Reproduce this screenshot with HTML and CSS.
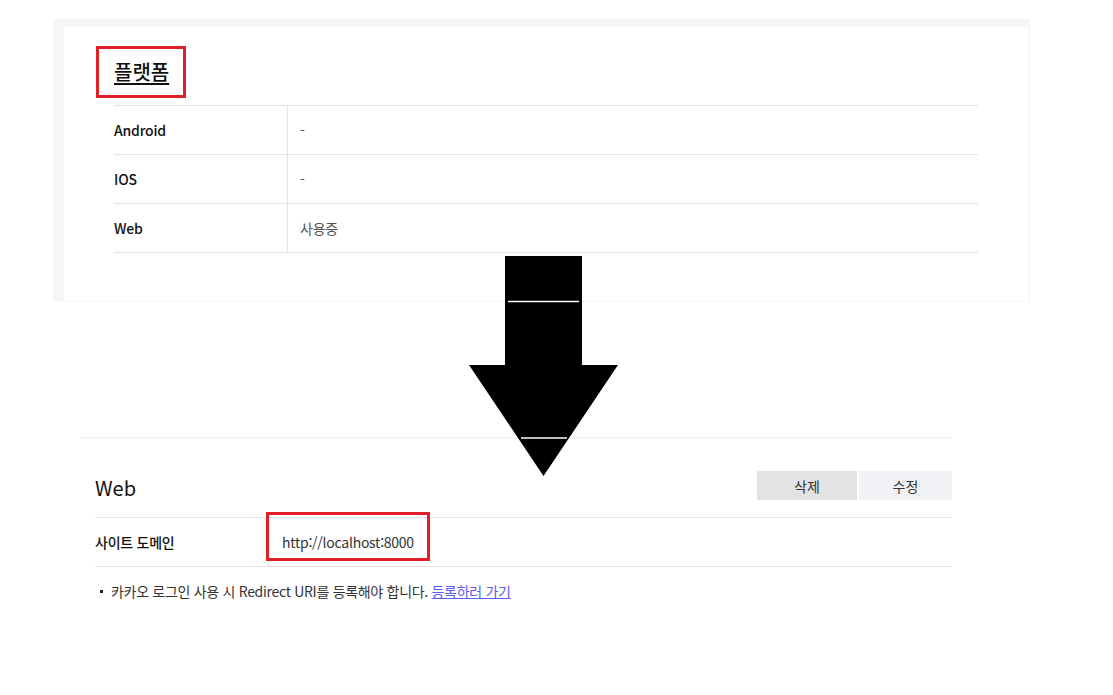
FILE: index.html
```html
<!DOCTYPE html>
<html lang="ko">
  <head>
    <meta charset="UTF-8">
    <meta name="viewport" content="width=device-width, initial-scale=1.0">
    <title>플랫폼</title>
    <link rel="stylesheet" href="styles.css">
  </head>
  <body>
    <!-- Platform panel -->
    <div class="panel">
      <div class="panel-inner">
        <div class="title-box">
          <h2 class="title">플랫폼</h2>
        </div>
        <div class="platform-table">
          <div class="row">
            <div class="label">Android</div>
            <div class="value">-</div>
          </div>
          <div class="row">
            <div class="label">IOS</div>
            <div class="value">-</div>
          </div>
          <div class="row">
            <div class="label">Web</div>
            <div class="value">사용중</div>
          </div>
        </div>
      </div>
    </div>

    <!-- Web section -->
    <div class="web-section">
      <div class="web-head">
        <h3 class="web-title">Web</h3>
        <div class="actions">
          <button class="btn btn-delete">삭제</button>
          <button class="btn btn-edit">수정</button>
        </div>
      </div>
      <div class="domain-row">
        <div class="domain-label">사이트 도메인</div>
        <div class="domain-value">
          http://localhost:8000
          <span class="mark"></span>
        </div>
      </div>
      <ul class="notes">
        <li>카카오 로그인 사용 시 Redirect URI를 등록해야 합니다. <a href="#">등록하러 가기</a></li>
      </ul>
    </div>

    <!-- Big arrow drawn over the page -->
    <svg class="arrow" width="150" height="221" viewBox="0 0 150 221">
      <polygon points="36,0 113,0 113,109 149,109 74.5,220 0,109 36,109" fill="#000"/>
      <line x1="39" y1="45.5" x2="110" y2="45.5" stroke="#fff" stroke-width="1.5"/>
      <line x1="52" y1="182" x2="98" y2="182" stroke="#fff" stroke-width="1.5"/>
    </svg>
  </body>
</html>
```

FILE: styles.css
```css
body {
  margin: 0;
  background-color: #fff;
  font-family: "Noto Sans CJK KR", "Noto Sans", sans-serif;
  color: #222;
  position: relative;
  min-height: 695px;
}

/* Platform panel */
.panel {
  margin: 19px 0 0 53px;
  width: 977px;
  box-sizing: border-box;
  padding: 8px 2px 1px 11px;
  background-color: #f5f6f6;
}

.panel-inner {
  background-color: #fff;
  height: 274px;
  padding: 19px 0 0 32px;
  box-sizing: border-box;
}

.title-box {
  display: inline-block;
  box-sizing: border-box;
  width: 90px;
  height: 52px;
  border: 3px solid #e31e26;
  padding-left: 15px;
}

.title {
  margin: 0;
  font-size: 20px;
  font-weight: 500;
  line-height: 46px;
  color: #111;
  text-decoration: underline;
  text-decoration-thickness: 2px;
  text-underline-offset: 3px;
}

.platform-table {
  margin: 7px 0 0 18px;
  width: 864px;
  border-top: 1px solid #e3e3e3;
}

.row {
  display: flex;
  height: 49px;
  border-bottom: 1px solid #e3e3e3;
  box-sizing: border-box;
  font-size: 14px;
  letter-spacing: -0.2px;
}

.label {
  width: 173px;
  border-right: 1px solid #e3e3e3;
  display: flex;
  align-items: center;
  font-weight: 500;
  color: #111;
}

.value {
  display: flex;
  align-items: center;
  padding-left: 12px;
  color: #555;
}

/* Web section */
.web-section {
  margin: 135px 0 0 80px;
  width: 872px;
  border-top: 2px solid #f4f4f4;
}

.web-head {
  display: flex;
  align-items: flex-end;
  justify-content: space-between;
  padding-top: 32px;
  height: 79px;
  margin-left: 15px;
  box-sizing: border-box;
  border-bottom: 1px solid #e3e3e3;
}

.web-title {
  margin: 0 0 14px;
  font-size: 20px;
  font-weight: 400;
  line-height: 30px;
  color: #111;
}

.actions {
  display: flex;
  gap: 2px;
  align-self: flex-start;
}

.btn {
  border: none;
  height: 29px;
  font-family: inherit;
  font-size: 14px;
  color: #333;
  padding: 0;
}

.btn-delete {
  width: 100px;
  background-color: #e3e3e3;
}

.btn-edit {
  width: 93px;
  background-color: #f1f2f6;
}

.domain-row {
  display: flex;
  height: 49px;
  margin-left: 15px;
  border-bottom: 1px solid #e3e3e3;
  font-size: 14px;
  letter-spacing: -0.25px;
  box-sizing: border-box;
}

.domain-label {
  width: 173px;
  border-right: 1px solid #e3e3e3;
  display: flex;
  align-items: center;
  font-weight: 500;
  color: #111;
}

.domain-value {
  position: relative;
  display: flex;
  align-items: center;
  padding-left: 13px;
  color: #333;
}

/* red highlight round the domain */
.mark {
  position: absolute;
  left: -3px;
  top: -6px;
  width: 164px;
  height: 49px;
  box-sizing: border-box;
  border: 3px solid #e31e26;
}

.notes {
  margin: 13px 0 0 15px;
  padding: 0;
  list-style: none;
  font-size: 14px;
  letter-spacing: -0.3px;
  color: #333;
}

.notes li {
  position: relative;
  padding-left: 16px;
  line-height: 22px;
}

.notes li::before {
  content: "";
  position: absolute;
  left: 5px;
  top: 10px;
  width: 3px;
  height: 3px;
  background-color: #222;
}

.notes a {
  color: #5c5cf5;
  text-decoration: underline;
}

.arrow {
  position: absolute;
  left: 469px;
  top: 256px;
}
```
